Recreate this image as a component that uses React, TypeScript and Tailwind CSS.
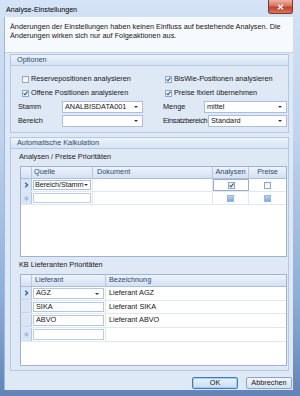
import React from "react";

function Check({ state }: { state: "on" | "off" | "mixed" }) {
  if (state === "mixed") {
    return (
      <span className="inline-flex w-[7px] h-[7px] border border-[#9ab6db] bg-white items-center justify-center">
        <span className="w-[5px] h-[5px] bg-[linear-gradient(to_bottom,#b9d3f1,#7fa9de)]" />
      </span>
    );
  }
  return (
    <span className="inline-flex w-[7px] h-[7px] border border-[#8ea7c8] bg-[linear-gradient(to_bottom,#eef3f9,#ffffff)] items-center justify-center shrink-0">
      {state === "on" && (
        <svg width="5" height="5" viewBox="0 0 5 5">
          <path d="M0.6 2.4 L2 3.9 L4.5 0.7" stroke="#2b5ea8" strokeWidth="1.2" fill="none" />
        </svg>
      )}
    </span>
  );
}

function Arrow() {
  return <span className="w-0 h-0 border-l-[2px] border-r-[2px] border-t-[2px] border-l-transparent border-r-transparent border-t-[#3a3a3a] shrink-0" />;
}

function Chevron() {
  return (
    <svg width="5" height="6" viewBox="0 0 5 6">
      <path d="M1.2 0.8 L3.6 3 L1.2 5.2" stroke="#2f5f9f" strokeWidth="1.3" fill="none" />
    </svg>
  );
}

function Star() {
  return (
    <svg width="5" height="5" viewBox="0 0 5 5">
      <path d="M2.5 0.3 V4.7 M0.4 1.3 L4.6 3.7 M0.4 3.7 L4.6 1.3" stroke="#93b2dc" strokeWidth="0.9" fill="none" />
    </svg>
  );
}

function Group({ title, className, children }: { title: string; className: string; children: React.ReactNode }) {
  return (
    <div className={"border border-[#b3c8e4] bg-[#dfe9f6] flex flex-col " + className}>
      <div className="h-[11px] border-b border-[#b3c8e4] bg-[linear-gradient(to_bottom,#ecf2fa,#d6e3f3)] pl-[6px] flex items-center text-[#2e4a70] leading-none">
        {title}
      </div>
      {children}
    </div>
  );
}

export default function App() {
  return (
    <div className="w-[300px] h-[396px] flex flex-col overflow-hidden bg-[linear-gradient(to_bottom,#d4e3f5,#bed3ec_35%,#8eaed8_75%,#6383b8)] font-['Liberation_Sans',Arial,sans-serif] text-[7.3px] text-[#161616]">
      {/* Title bar */}
      <div className="h-[17px] flex items-start justify-between pl-[6px] pr-[7px] shrink-0">
        <div className="pt-[5px] text-[7.2px] leading-[9px] text-black">Analyse-Einstellungen</div>
        <div className="w-[25px] h-[14px] rounded-b-[3px] border border-t-0 border-[#86352a] bg-[linear-gradient(to_bottom,#eeb3a4,#d9735d_45%,#c2412a_55%,#d7755b)] flex items-center justify-center">
          <svg width="7" height="6" viewBox="0 0 7 6">
            <path d="M1 0.8 L6 5.2 M6 0.8 L1 5.2" stroke="#ffffff" strokeWidth="1.5" />
          </svg>
        </div>
      </div>

      {/* Client area */}
      <div className="flex-1 ml-[4px] mr-[7px] mb-[6px] bg-[#dfe9f6] flex flex-col border-l border-[#9fb7d8]">
        <div className="h-[36px] bg-[#f6f9fd] border-b border-[#c6d5ea] pl-[5px] pt-[5px] leading-[9px] shrink-0">
          <div>Änderungen der Einstellungen haben keinen Einfluss auf bestehende Analysen. Die</div>
          <div>Änderungen wirken sich nur auf Folgeaktionen aus.</div>
        </div>

        {/* Optionen */}
        <Group title="Optionen" className="mt-[1px] ml-[5px] mr-[4px] h-[79px] shrink-0">
          <div className="pt-[6px] flex flex-col">
            <div className="h-[14px] flex items-center">
              <div className="w-[149px] pl-[11px] flex items-center gap-[2px]">
                <Check state="off" />
                <span>Reservepositionen analysieren</span>
              </div>
              <div className="pl-[5px] flex items-center gap-[2px]">
                <Check state="on" />
                <span>BisWie-Positionen analysieren</span>
              </div>
            </div>
            <div className="h-[14px] flex items-center">
              <div className="w-[149px] pl-[11px] flex items-center gap-[2px]">
                <Check state="on" />
                <span>Offene Positionen analysieren</span>
              </div>
              <div className="pl-[5px] flex items-center gap-[2px]">
                <Check state="on" />
                <span>Preise fixiert übernehmen</span>
              </div>
            </div>
            <div className="h-[14px] flex items-center">
              <div className="w-[149px] pl-[7px] flex items-center">
                <span className="w-[44px]">Stamm</span>
                <div className="w-[81px] h-[12px] border border-[#a9bfdc] bg-white flex items-center justify-between pl-[2px] pr-[4px]">
                  <span>ANALBISDATA001</span>
                  <Arrow />
                </div>
              </div>
              <div className="pl-[3px] flex items-center">
                <span className="w-[41px]">Menge</span>
                <div className="w-[83px] h-[12px] border border-[#a9bfdc] bg-white flex items-center justify-between pl-[2px] pr-[4px]">
                  <span>mittel</span>
                  <Arrow />
                </div>
              </div>
            </div>
            <div className="h-[14px] flex items-center">
              <div className="w-[149px] pl-[7px] flex items-center">
                <span className="w-[44px]">Bereich</span>
                <div className="w-[81px] h-[12px] border border-[#a9bfdc] bg-white flex items-center justify-end pl-[2px] pr-[4px]">
                  <Arrow />
                </div>
              </div>
              <div className="pl-[3px] flex items-center">
                <span className="w-[45px] whitespace-nowrap tracking-[-0.25px]">Einsatzbereich</span>
                <div className="w-[79px] h-[12px] border border-[#a9bfdc] bg-white flex items-center justify-between pl-[2px] pr-[4px]">
                  <span>Standard</span>
                  <Arrow />
                </div>
              </div>
            </div>
          </div>
        </Group>

        {/* Automatische Kalkulation */}
        <Group title="Automatische Kalkulation" className="mt-[4px] ml-[5px] mr-[4px] h-[234px] shrink-0">
          <div className="flex flex-col pl-[8px]">
            <div className="mt-[3px] h-[9px] leading-[9px]">Analysen / Preise Prioritäten</div>
            {/* Grid 1 */}
            <div className="mt-[5px] ml-[1px] w-[267px] h-[91px] border border-[#9cb3d4] bg-white flex flex-col">
              <div className="h-[12px] flex border-b border-[#a9bfdd] bg-[linear-gradient(to_bottom,#eef3fb,#d4e1f2)] text-[#2b4870] shrink-0">
                <div className="w-[11px] border-r border-[#b5c8e3]" />
                <div className="w-[61px] border-r border-[#b5c8e3] pl-[2px] flex items-center">Quelle</div>
                <div className="w-[120px] border-r border-[#b5c8e3] pl-[4px] flex items-center">Dokument</div>
                <div className="w-[36px] border-r border-[#b5c8e3] flex items-center justify-center">Analysen</div>
                <div className="flex-1 flex items-center justify-center">Preise</div>
              </div>
              <div className="h-[13px] flex border-b border-[#e0e8f3] shrink-0">
                <div className="w-[11px] bg-[#dae5f4] border-r border-[#b5c8e3] flex items-center justify-center">
                  <Chevron />
                </div>
                <div className="w-[61px] border-r border-[#e0e8f3] p-[1px]">
                  <div className="h-full border border-[#a7bedd] bg-white flex items-center justify-between pl-[1px] pr-[3px]">
                    <span className="tracking-[-0.1px]">Bereich/Stamm</span>
                    <Arrow />
                  </div>
                </div>
                <div className="w-[120px] border-r border-[#e0e8f3]" />
                <div className="w-[36px] border border-[#9eaec6] flex items-center justify-center">
                  <Check state="on" />
                </div>
                <div className="flex-1 flex items-center justify-center">
                  <Check state="off" />
                </div>
              </div>
              <div className="h-[13px] flex border-b border-[#e0e8f3] shrink-0">
                <div className="w-[11px] bg-[#dae5f4] border-r border-[#b5c8e3] flex items-center justify-center">
                  <Star />
                </div>
                <div className="w-[61px] border-r border-[#e0e8f3] p-[1px]">
                  <div className="h-full border border-[#bccde5] bg-white" />
                </div>
                <div className="w-[120px] border-r border-[#e0e8f3]" />
                <div className="w-[36px] border-r border-[#e0e8f3] flex items-center justify-center">
                  <Check state="mixed" />
                </div>
                <div className="flex-1 flex items-center justify-center">
                  <Check state="mixed" />
                </div>
              </div>
            </div>

            <div className="mt-[3px] h-[9px] leading-[9px]">KB Lieferanten Prioritäten</div>
            {/* Grid 2 */}
            <div className="mt-[5px] ml-[1px] w-[267px] h-[92px] border border-[#9cb3d4] bg-white flex flex-col">
              <div className="h-[12px] flex border-b border-[#a9bfdd] bg-[linear-gradient(to_bottom,#eef3fb,#d4e1f2)] text-[#2b4870] shrink-0">
                <div className="w-[11px] border-r border-[#b5c8e3]" />
                <div className="w-[74px] border-r border-[#b5c8e3] pl-[3px] flex items-center">Lieferant</div>
                <div className="flex-1 pl-[3px] flex items-center">Bezeichnung</div>
              </div>
              {[
                { l: "AGZ", b: "Lieferant AGZ", cur: true, h: "h-[14px]" },
                { l: "SIKA", b: "Lieferant SIKA", cur: false, h: "h-[13px]" },
                { l: "ABVO", b: "Lieferant ABVO", cur: false, h: "h-[14px]" },
              ].map((r) => (
                <div key={r.l} className={"flex border-b border-[#e0e8f3] shrink-0 " + r.h}>
                  <div className="w-[11px] bg-[#dae5f4] border-r border-[#b5c8e3] border-b border-b-[#c5d5ea] flex items-center justify-center">
                    {r.cur && <Chevron />}
                  </div>
                  <div className="w-[74px] border-r border-[#e0e8f3] p-[1px]">
                    <div className="h-full border border-[#b3c7e2] bg-white flex items-center justify-between pl-[2px] pr-[4px]">
                      <span>{r.l}</span>
                      {r.cur && <Arrow />}
                    </div>
                  </div>
                  <div className="flex-1 pl-[3px] flex items-center">{r.b}</div>
                </div>
              ))}
              <div className="h-[14px] flex border-b border-[#e0e8f3] shrink-0">
                <div className="w-[11px] bg-[#dae5f4] border-r border-[#b5c8e3] flex items-center justify-center">
                  <Star />
                </div>
                <div className="w-[74px] border-r border-[#e0e8f3] p-[1px]">
                  <div className="h-full border border-[#bccde5] bg-white" />
                </div>
                <div className="flex-1" />
              </div>
            </div>
          </div>
        </Group>

        {/* Buttons */}
        <div className="mt-[6px] flex justify-end gap-[8px] pr-[1px]">
          <div className="w-[46px] h-[12px] rounded-[2px] border border-[#3f7cbc] bg-[linear-gradient(to_bottom,#e9f2fc,#c9dcf2)] flex items-center justify-center shadow-[inset_0_0_0_1px_#9fd0f2]">
            OK
          </div>
          <div className="w-[46px] h-[12px] rounded-[2px] border border-[#8aa5c8] bg-[linear-gradient(to_bottom,#f3f7fc,#d3e1f2)] flex items-center justify-center">
            Abbrechen
          </div>
        </div>
      </div>
    </div>
  );
}
